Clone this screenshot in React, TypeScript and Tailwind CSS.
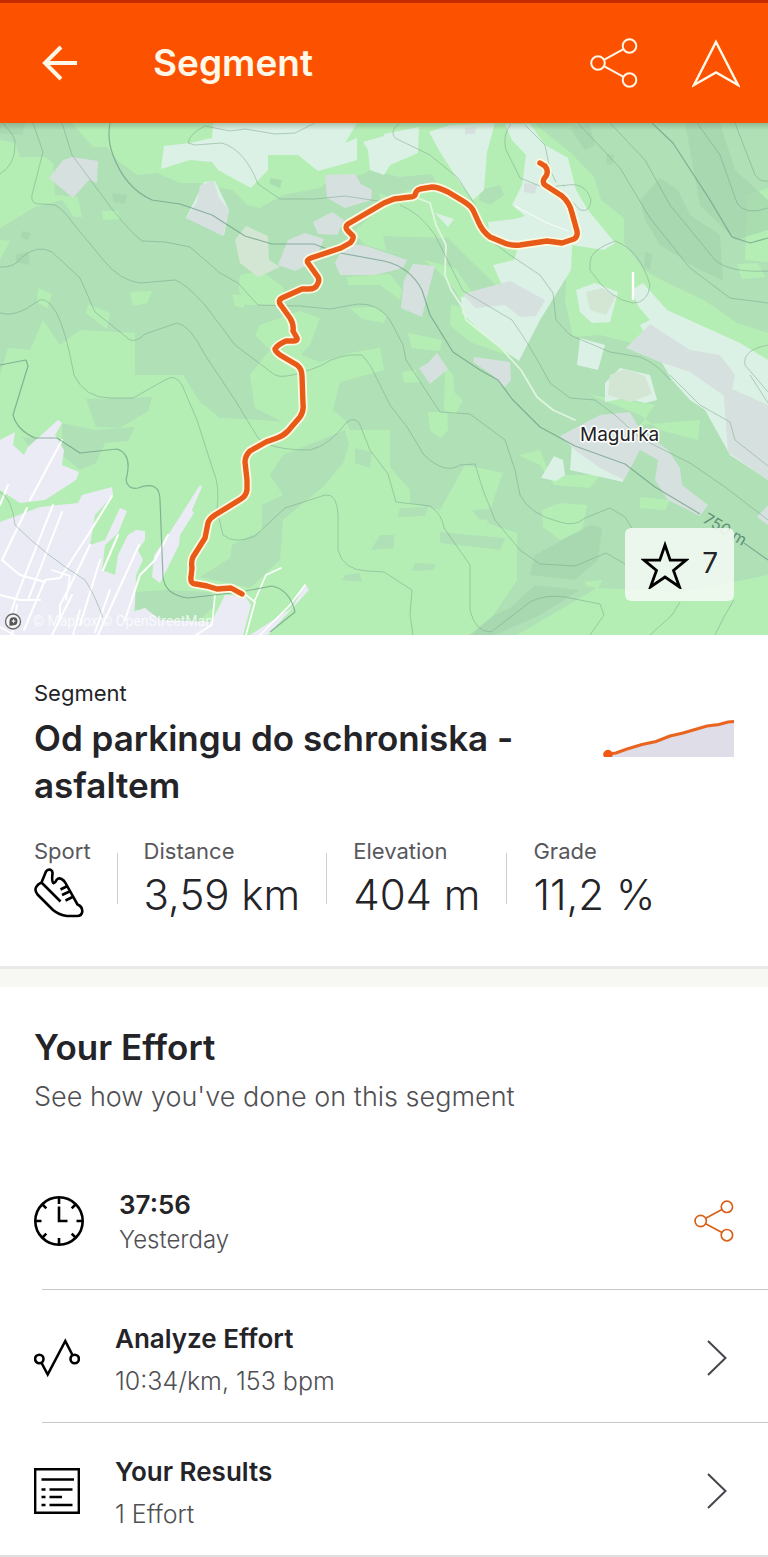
import type { ReactNode } from "react";

const forestLight = [
  "M0 140L15 143 20 157 45 157 53 163 55 195 78 197 82 217 74 217 62 200 35 207 0 228Z",
  "M72 123L93 147 107 147 117 160 137 175 157 173 180 183 200 183 213 187 233 190 247 205 260 208 283 195 320 188 333 178 390 172V123Z",
  "M384 123H534L551 137 571 153 594 177 601 200 624 218V243L644 270 667 283 704 300 737 323 768 333V400L720 385 657 320 640 345 600 335 573 337 565 300 567 262 514 277 507 295 480 290 460 300 455 290 437 270 420 257 395 253 365 245 353 232 384 205 370 175Z",
  "M0 375L8 348 30 350 43 320 60 345 80 330 135 333V375H183L200 402 220 418 260 420 283 422 255 408 250 375 270 350 255 335 260 325 300 311 320 318 310 345 301 355 320 362 355 352 380 348 384 370 340 382 333 410 345 420 350 430 390 430V467L410 490V503L440 510 465 465 503 473 495 495 487 523 517 533V580L493 616 470 635H0Z",
  "M517 635L597 588 684 592 768 575V635Z",
  "M130 292L152 291 147 303 133 306Z",
  "M102 211L118 211 120 219 103 220Z",
  "M88 304L110 313 107 329 86 313Z",
  "M38 288L52 294 47 308 37 302Z",
  "M0 240L10 241 0 260Z",
  "M240 275L262 271 284 288 281 305 246 305 239 290Z",
  "M347 277L390 274 402 290 400 300 380 285 348 285Z",
  "M350 308L375 307 387 316 384 323 362 319Z",
  "M232 294L248 296 243 308 235 306Z",
  "M747 195L768 188V262L745 260Z",
  "M737 264L758 263 765 277 742 279Z",
  "M451 305L471 308 500 330 516 358 470 342 450 325Z",
  "M408 333L442 340 440 351 412 348Z",
  "M402 372L415 370 420 382 404 383Z",
  "M445 365L453 375 455 393 463 400 455 415 444 410Z",
  "M428 412L447 412 448 430 440 438 430 430Z",
  "M518 455L540 450 550 475 600 475 590 488 554 485 540 465Z",
  "M542 510L560 503 587 505 582 530 560 540 543 527Z",
  "M590 395L625 400 655 405 640 425 700 420 698 440 660 430 640 415Z",
  "M640 497L670 500 665 510 640 508Z",
  "M585 582L602 580 598 588 587 586Z",
];

const forestDark = [
  "M383 236L448 238 470 260 506 295 472 292 455 268 432 262 386 250Z",
  "M86 399L152 397 148 411 120 428 96 427Z",
  "M62 423L95 430 135 427 128 441 105 443 96 463 80 470 62 455Z",
  "M22 437L48 439 47 448 30 448Z",
  "M283 455L345 430 349 445 343 463 325 485 283 520 280 560 250 588 200 577 230 558 232 545 262 530V505L283 495 270 475Z",
  "M355 448L372 452 370 468 355 463Z",
  "M135 592L165 590 210 592 215 605 190 630 165 625 133 607Z",
  "M510 300L540 320 555 350 540 390 522 360Z",
  "M358 178L370 170 400 177 432 174 436 182 420 186 390 198 372 190Z",
  "M480 190L500 185 504 195 490 205 479 200Z",
  "M345 575L360 573 362 582 342 580Z",
  "M380 535H394L394 548 371 550Z",
  "M415 563L436 564 433 570 412 571Z",
  "M440 532L470 535 505 538 500 550 485 548 440 543Z",
  "M400 508L428 507 425 516 398 517Z",
  "M472 510L500 508 505 518 480 520Z",
];

const forestDeep = [
  "M640 200L660 178 678 190 690 215 720 235 723 280 700 270 660 245 645 220Z",
  "M685 123L720 123 735 170 768 200V230L735 240 700 205Z",
  "M570 128L590 124 595 145 585 150Z",
  "M607 154L614 155 612 165 606 164Z",
  "M112 193L127 195 125 204 114 202Z",
  "M270 178L282 180 280 188 270 184Z",
  "M22 231L31 233 28 240 21 238Z",
  "M16 255L28 252 30 265 16 262Z",
  "M645 252L652 254 650 270 644 266Z",
  "M0 123L26 123 22 135 0 133Z",
  "M535 555L590 525 602 528 598 560 575 580 530 575Z",
  "M494 615L510 608 535 585 580 590 540 615 495 635 470 635Z",
];

const meadow = [
  "M213 123H357L345 143 357 138V160L340 165 318 171 298 155 268 155 268 170 251 188 218 170 212 162 190 160 161 169 164 146 190 143 212 138Z",
  "M384 134L419 127 418 153 390 165 384 175 370 170 368 150 363 142 384 136Z",
  "M429 132L450 125 495 123 487 152 484 190 473 200 458 180 440 152Z",
  "M505 124L530 124 545 145 568 158 576 190 588 210 615 243 604 250 572 245 571 270 540 320 519 361 490 340 462 313 461 297 505 292 493 265 514 260 518 248 490 240 488 222 515 219 525 216 512 205 522 185 526 155 512 140Z",
  "M632 290L643 283 667 310 740 343 768 360V480L730 455 705 410 690 400 672 380 640 325 650 320 638 306Z",
  "M576 290L595 283 618 292 610 322 592 323 580 312Z",
  "M605 383L620 368 650 375 657 400 645 403 625 398 605 402Z",
  "M580 338L605 345 598 370 577 365Z",
  "M572 443L610 420 635 420 630 445 623 482 570 470Z",
  "M541 478L554 456 563 460 565 475 556 481Z",
  "M204 182L215 181 229 210 227 220 224 235 186 218Z",
  "M435 213L454 219 448 227Z",
];

const fallow = [
  "M49 178L63 160 72 157 98 161 97 183 89 180 73 198Z",
  "M200 185L214 181 219 198 229 210 223 236 186 218 197 202Z",
  "M325 175L355 174 361 184 372 190 371 200 345 208 327 198Z",
  "M313 222L332 212 344 220 337 235 318 234Z",
  "M278 265L288 240 305 233 324 239 314 262 295 271Z",
  "M335 263L345 243 366 246 407 260 403 268 375 275 340 275Z",
  "M413 264L435 266 430 285 422 317 401 308 404 280Z",
  "M463 294L470 292 510 281 545 300 536 316 520 317 505 305 475 308Z",
  "M626 348L650 324 690 350 720 355 735 375 730 400 690 372 660 362Z",
  "M419 368L428 363 437 353 448 369 430 384Z",
  "M474 357L510 362 511 380 505 387 492 375 473 362Z",
  "M560 436L600 415 630 412 640 430 668 450 680 468 682 485 708 505 700 516 668 500 655 480 658 460 640 450 624 480 600 468 575 450Z",
  "M723 385L768 405V480L728 452Z",
  "M768 505L757 517 768 525Z",
  "M524 183L537 184 535 194 524 192Z",
  "M465 128L476 127 475 134 465 134Z",
];

const pasture = [
  "M235 240L246 226 268 236 269 260 280 267 258 277 240 263Z",
  "M586 292L602 288 616 296 606 315 590 310Z",
  "M610 375L625 369 645 376 652 394 630 402 608 395Z",
];

const town = [
  "M0 440L15 432 13 445 24 455 28 447 58 420 62 423 55 435 64 450 62 465 79 472 76 480 45 500 20 503 0 490Z",
  "M0 522L40 507 78 503 82 495 112 487 113 495 95 515 90 545 105 540 120 508 127 511 118 533 105 545 102 570 115 575 118 555 128 535 136 530 145 531 145 540 138 550 143 560 136 575 135 605 130 635H0Z",
  "M200 485L202 487 192 510 194 513 180 535 179 545 160 583 152 577 154 555 165 540Z",
  "M225 595L245 596 251 605 243 635H205Z",
  "M305 584L309 590 268 635H250L292 608Z",
  "M132 612L145 608 160 620 214 622 213 635H128Z",
];

const roads = [
  "M8 485L0 505M53 505L16 598 8 620M62 512L28 600M112 496L88 535 60 578 45 580 24 630M27 508L2 560 20 575 45 582M90 545L68 590 60 605 60 620M0 595L20 600 40 600",
  "M100 560L80 625M139 545L98 635M72 595L52 635M110 590L95 632M168 535L155 560 140 575 125 620M62 440L30 500M17 605L12 635M118 535L103 570",
  "M246 595L255 602 246 635M255 600L266 575 281 568M305 585L290 605 260 635M215 595L212 625 196 635M0 627L14 635M80 610L73 635M52 570L70 576 66 600",
  "M415 197L430 203 436 225 446 245 445 275 451 290 463 308 466 320 500 347 521 370 537 397 553 410 575 420",
  "M515 206L545 222 568 231",
];

const contours = [
  "M3 123Q17 138 15 145Q15 165 0 174",
  "M33 123L43 152 32 195Q30 205 42 204L55 205Q65 211 72 222L105 262Q120 280 140 283L175 280Q185 283 205 305L235 345 275 375Q285 380 320 366 340 353 362 355L370 365 390 405 407 427 424 455Q445 475 460 465L475 464 483 490 495 520 520 550 540 564 575 566 606 553 625 564",
  "M62 123L72 155 98 190Q125 228 142 241L165 242 190 247 220 273 238 283 258 305 300 306 330 309 358 304Q378 303 390 320L403 345 406 360 440 412 470 414 505 440 515 470 520 495Q530 515 560 522 575 527 585 518L610 508 625 517 633 530",
  "M315 123L295 133 275 134 245 129 230 131 205 126Q190 133 188 143L195 145 222 143Q245 150 258 184L280 199 315 199 345 196 384 202",
  "M0 267Q15 268 22 257Q38 244 52 252L80 278 95 312 130 340Q137 342 145 334L177 323Q190 325 205 355L235 400 258 438Q270 450 310 450 330 445 345 424Q357 413 362 430L370 450 388 474 396 502 430 506Q442 514 444 528L470 565 470 610Q475 632 491 632L530 602Q545 594 565 597L600 604 604 615 590 635",
  "M0 313Q15 318 35 303Q45 293 56 312Q66 330 74 375Q85 398 110 398L133 398 165 380Q175 373 182 385L197 420 213 470Q220 485 217 510L223 535Q235 545 255 536L285 508 325 495Q337 493 338 515L338 550Q343 570 367 571L384 572 412 590 410 615 413 635",
  "M400 123Q389 130 395 138L430 155 458 178 475 205 490 240 510 255 540 275 553 293 556 320 570 335 610 352 640 357Q656 363 670 380",
  "M400 205Q420 213 435 235L455 275 463 291 512 320Q530 345 550 383L570 398 595 400 615 415 640 438 690 463 725 487 768 520",
  "M680 602L672 615 650 635M734 600L725 615 715 635",
  "M578 123L620 168 650 218 690 268 730 298 768 303M610 123L645 160 670 205 715 260Q730 273 768 271M735 123L755 175Q760 182 768 181M697 123L720 155 737 203Q745 216 768 208",
  "M511 124Q502 135 506 150L520 178 545 188 565 185M525 125L545 145 550 170 556 182M563 186Q585 180 591 200 590 213 580 210L566 195",
  "M590 262Q590 250 615 241 640 250 650 285Q648 303 633 303 610 300 590 270Z",
  "M768 345Q742 350 745 365L768 392M670 375L700 405 730 422 735 440 768 466M750 375L768 403M0 492Q12 498 15 525 45 555 85 580 95 595 103 618",
];

const indexContours = [
  "M110 123Q107 140 113 155 125 188 152 200L180 204 212 215 245 236 272 244 314 244 335 252 384 261Q410 267 422 290L430 315 453 352 480 370 498 380 512 399 540 427 575 446 625 464 655 487 700 514",
  "M0 365L26 360 28 366 13 415Q17 430 35 438L57 438 80 453 117 449Q133 454 126 480 128 490 138 488 160 480 160 500L163 577Q165 595 188 598L240 592 272 586Q290 590 295 612L270 632",
  "M652 123L673 143 710 200 732 237 750 243 768 238",
  "M744 543L768 560",
];

const route =
  "M540 163L545 166Q549 171 546 176Q541 182 545 185L562 196Q570 203 572 213L577 231Q578 237 574 239L562 243 547 241 520 245Q510 246 502 242L490 237Q482 231 478 221L473 210Q471 206 463 201L448 192Q438 187 432 187L420 189Q416 190 415 195Q414 197 410 197L394 199 384 203 348 224Q344 227 348 231L353 236Q354 239 350 243L341 248 326 253 311 258Q306 260 308 263L318 277Q320 281 317 285Q315 289 309 289L302 289 282 298Q278 300 280 304L290 318Q294 324 293 331L297 338Q298 341 293 341L286 341Q277 345 275 349Q275 351 280 355L297 365Q302 369 302 376L303 404Q304 411 300 417L288 431Q283 436 277 438L266 442 250 451Q245 456 245 462L247 480 247 490Q246 496 241 499L215 515Q209 519 208 523L205 538 193 557Q191 561 192 568L191 577Q190 584 196 584L207 586 217 589 231 588 242 594";

function TrailMap() {
  return (
    <svg viewBox="0 123 768 512" className="block h-auto w-full" role="img" aria-label="Segment route near Magurka">
      <defs>
        <linearGradient id="barShade" x1="0" y1="0" x2="0" y2="1">
          <stop offset="0" stopColor="#6f8f72" stopOpacity=".45" />
          <stop offset="1" stopColor="#6f8f72" stopOpacity="0" />
        </linearGradient>
      </defs>
      <rect y="123" width="768" height="512" fill="#afe0b6" />
      {forestLight.map((d) => <path key={d} d={d} fill="#b5eeb5" />)}
      {forestDark.map((d) => <path key={d} d={d} fill="#afe0b6" />)}
      {forestDeep.map((d) => <path key={d} d={d} fill="#a5d6ad" opacity=".75" />)}
      {meadow.map((d) => <path key={d} d={d} fill="#dcf1e5" />)}
      {fallow.map((d) => <path key={d} d={d} fill="#d6e1df" />)}
      {pasture.map((d) => <path key={d} d={d} fill="#d2e6d3" />)}
      {town.map((d) => <path key={d} d={d} fill="#ebebf5" />)}
      <g fill="none" stroke="#fff" strokeWidth="2" strokeLinejoin="round" strokeLinecap="round">
        <path d={roads[0]} />
        <path d={roads[1]} />
        <path d={roads[2]} strokeWidth="1.6" />
        <path d={roads[3]} stroke="#dff5df" strokeWidth="1.8" />
        <path d={roads[4]} strokeWidth="1.2" opacity=".7" />
        <path d="M633 272V300" strokeWidth="2.4" strokeLinecap="butt" />
      </g>
      <g fill="none" stroke="#7aa58d" strokeWidth="1" strokeLinejoin="round" opacity=".5">
        {contours.map((d) => <path key={d} d={d} />)}
      </g>
      <g fill="none" stroke="#6c9a85" strokeWidth="1.2" strokeLinejoin="round" opacity=".7">
        {indexContours.map((d) => <path key={d} d={d} />)}
      </g>
      <text transform="translate(702 522) rotate(31)" fontSize="16" fill="#5c8f74" fontFamily="Inter, sans-serif">750 m</text>
      <path d={route} fill="none" stroke="#fff8e0" strokeWidth="9" strokeLinecap="round" strokeLinejoin="round" />
      <path d={route} fill="none" stroke="#e85a17" strokeWidth="5.400" strokeLinecap="round" strokeLinejoin="round" />
      <text x="580" y="441" fontSize="19" fill="#222" stroke="#fff" strokeWidth="3" strokeLinejoin="round" paintOrder="stroke" fontFamily="Inter, sans-serif">Magurka</text>
      <text x="33" y="626" fontSize="14" fill="#fff" opacity=".75" fontFamily="Roboto, sans-serif">© Mapbox © OpenStreetMap</text>
      <circle cx="13" cy="621.500" r="7.500" fill="#f4f4f4" stroke="#666" strokeWidth="1.300" />
      <path d="M9.500 625.500V621a4 4 0 1 1 4 4.200Q11 626 9.500 625.500Z" fill="#555" />
      <path d="M13.500 618.500L14.300 620.400 16.200 621 14.300 621.800 13.500 623.500 12.700 621.800 11 621 12.700 620.400Z" fill="#f4f4f4" />
      <rect y="123" width="768" height="7" fill="url(#barShade)" />
    </svg>
  );
}

function ShareIcon({ className }: { className: string }) {
  return (
    <svg viewBox="0 0 48 50" className={className} fill="none" stroke="currentColor" strokeWidth="2" aria-hidden="true">
      <circle cx="8" cy="25" r="6.800" />
      <circle cx="39.500" cy="8" r="6.800" />
      <circle cx="39.500" cy="42" r="6.800" />
      <path d="M14 21.800L33.500 11.200M14 28.200L33.500 38.800" />
    </svg>
  );
}

function ShoeIcon() {
  return (
    <svg viewBox="0 0 50 50" className="size-[50px]" fill="none" stroke="#000" strokeWidth="2.600" strokeLinejoin="round" aria-hidden="true">
      <path d="M7.500 14.500L12 3.500Q13.500 1 16.500 1.800Q18.800 2.800 18.500 5.500Q17.500 14 19.500 15.200Q21.500 14.800 22.500 12Q24.500 9.500 27.500 11Q30 12.200 31.500 15L43.500 36.500Q48.500 38.500 48.300 43.500Q47.800 48 43 48H33Q25 47 19 42L3.500 26.500Q0 22 2.500 18.500Q4 16 7.500 14.500L26.500 33.500M26.500 21.500L32.500 18.500M28 27L35.500 23.500M31.500 32.500L38.500 29" />
    </svg>
  );
}

function ClockIcon() {
  return (
    <svg viewBox="0 0 50 50" className="size-[50px]" fill="none" stroke="#000" strokeWidth="2.600" aria-hidden="true">
      <circle cx="25" cy="25" r="23.700" />
      <path d="M25 1V8M25 42V49M1 25H7.500M42.500 25H49M8 8L12.300 12.300M42 8L37.700 12.300M8 42L12.300 37.700M42 42L37.700 37.700M25 10.500V25H33.500" />
    </svg>
  );
}

function AnalyzeIcon() {
  return (
    <svg viewBox="0 0 46 46" className="size-[46px]" fill="none" stroke="#000" strokeWidth="2.600" aria-hidden="true">
      <circle cx="5.300" cy="24" r="4.200" />
      <circle cx="40.700" cy="24" r="4.200" />
      <path d="M7.300 27.500L13.700 39.500 31.300 6 38.700 20.500" />
    </svg>
  );
}

function ResultsIcon() {
  return (
    <svg viewBox="0 0 46 46" className="size-[46px]" fill="none" stroke="#000" strokeWidth="2.400" aria-hidden="true">
      <path d="M1.200 1.200H44.800V44.800H1.200ZM7.500 11.500H40M7.500 21.500H11.500M15.500 21.500H38.500M7.500 29H11.500M15.500 29H28M7.500 37H11.500M15.500 37H38.500" />
    </svg>
  );
}

function Chevron() {
  return (
    <svg viewBox="0 0 20 36" className="mr-[7px] h-9 w-5 shrink-0" fill="none" stroke="#45454c" strokeWidth="2" aria-hidden="true">
      <path d="M1 1L18.500 18 1 35" />
    </svg>
  );
}

function Stat({ label, children, first }: { label: string; children: ReactNode; first?: boolean }) {
  return (
    <div className="flex">
      {!first && <div className="mx-[26px] mt-4 h-[51px] w-px bg-[#cfcfcf]" />}
      <div>
        <dt className="text-[22px] leading-7 text-[#58585c]">{label}</dt>
        <dd className="text-[42px] leading-[60px] font-light text-[#242428]">{children}</dd>
      </div>
    </div>
  );
}

function LinkRow({ icon, title, detail }: { icon: ReactNode; title: string; detail: string }) {
  return (
    <li>
      <a href="#" className="flex h-[132px] items-center px-[34px] pt-1">
        <span className="w-[81px] shrink-0">{icon}</span>
        <span className="flex grow flex-col pt-1">
          <span className="text-[26px] leading-[42px] font-semibold">{title}</span>
          <span className="text-[25px] leading-[42px] font-light text-[#505054]">{detail}</span>
        </span>
        <Chevron />
      </a>
    </li>
  );
}

export default function App() {
  return (
    <div className="min-h-screen bg-white font-['Inter',sans-serif] text-[#242428]">
      <header className="flex h-[123px] items-center border-t-[3px] border-[#c42c00] bg-[#fc5200] pr-7 pl-[42px] text-[#fff8e8]">
        <button type="button" aria-label="Back" className="w-[111px] shrink-0">
          <svg viewBox="0 0 36 36" className="size-9" fill="none" stroke="currentColor" strokeWidth="4">
            <path d="M35 18H4M19 2L3 18 19 34" />
          </svg>
        </button>
        <h1 className="grow text-[37px] leading-[48px] font-semibold">Segment</h1>
        <button type="button" aria-label="Share segment" className="mr-[54px]">
          <ShareIcon className="h-[50px] w-12" />
        </button>
        <button type="button" aria-label="Navigate">
          <svg viewBox="0 0 48 50" className="h-[50px] w-12" fill="none" stroke="currentColor" strokeWidth="2.400">
            <path d="M24 4L46 47 24 34.500 2 47Z" />
          </svg>
        </button>
      </header>

      <main>
        <div className="relative">
          <TrailMap />
          <button type="button" aria-label="Star segment, 7 stars" className="absolute right-[34px] bottom-[34px] flex h-[73px] w-[109px] items-center justify-between rounded-md bg-[#f2faf2]/90 px-4">
            <svg viewBox="0 0 48 48" className="size-12" fill="none" stroke="#000" strokeWidth="2.800" strokeLinejoin="miter">
              <path d="M24 4L29.200 19.200H45L32.500 29.500 38.500 46 24 36 9.500 46 15.500 29.500 3 19.200H18.800Z" />
            </svg>
            <span className="pb-1 text-[28px] leading-9">7</span>
          </button>
        </div>

        <section className="px-[34px] pt-11 pb-[41px]">
          <p className="text-[22px] leading-7">Segment</p>
          <div className="mt-2 flex items-start justify-between gap-6">
            <h2 className="max-w-[500px] text-[35px] leading-[47px] font-semibold">Od parkingu do schroniska - asfaltem</h2>
            <svg viewBox="0 0 131 38" className="mt-1 h-[38px] w-[131px] shrink-0" role="img" aria-label="Elevation profile">
              <path d="M5 35L24 30 39 25.500 53 22.500 67 17 80 14 104 7 116 5.500 125 3 131 2.500V38H5Z" fill="#dfdde8" />
              <path d="M5 35L13 34 24 30 39 25.500 53 22.500 67 17 80 14 104 7 116 5.500 125 3 131 2.500" fill="none" stroke="#e8641f" strokeWidth="3" />
              <path d="M1 38A4.700 4.700 0 1 1 9 38Z" fill="#f05a16" />
            </svg>
          </div>
          <dl className="mt-7 flex">
            <Stat label="Sport" first>
              <span className="flex pt-[3px]" role="img" aria-label="Run"><ShoeIcon /></span>
            </Stat>
            <Stat label="Distance">3,59 km</Stat>
            <Stat label="Elevation">404 m</Stat>
            <Stat label="Grade">11,2 %</Stat>
          </dl>
        </section>

        <div className="h-[21px] border-t-[3px] border-[#e9e9e7] bg-[#f7f8f3]" />

        <section className="pt-9">
          <div className="px-[34px]">
            <h2 className="text-[35px] leading-[48px] font-semibold">Your Effort</h2>
            <p className="mt-2 text-[27px] leading-9 font-light text-[#505054]">See how you've done on this segment</p>
          </div>
          <ul className="mt-[42px] border-b-2 border-[#dfdfdf]">
            <li className="flex h-[132px] items-center px-[34px] pb-1">
              <span className="w-[85px] shrink-0"><ClockIcon /></span>
              <span className="flex grow flex-col pt-0.5">
                <span className="text-[26px] leading-[35px] font-semibold">37:56</span>
                <span className="text-[24px] leading-[35px] font-light text-[#505054]">Yesterday</span>
              </span>
              <button type="button" aria-label="Share effort" className="text-[#d96018]">
                <ShareIcon className="h-[42px] w-10" />
              </button>
            </li>
            <li aria-hidden="true" className="ml-[42px] h-px bg-[#c8c8c8]" />
            <LinkRow icon={<AnalyzeIcon />} title="Analyze Effort" detail="10:34/km, 153 bpm" />
            <li aria-hidden="true" className="ml-[42px] h-px bg-[#c8c8c8]" />
            <LinkRow icon={<ResultsIcon />} title="Your Results" detail="1 Effort" />
          </ul>
        </section>
      </main>
    </div>
  );
}
